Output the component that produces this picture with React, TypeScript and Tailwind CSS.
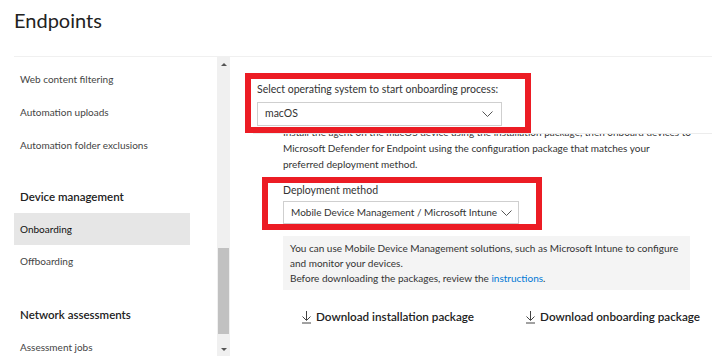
import React from "react";

const font = { fontFamily: 'Lato, "Noto Sans", sans-serif' };

function Chevron() {
  return (
    <svg width="11" height="6" viewBox="0 0 11 6" fill="none">
      <path d="M0.5 0.5 L5.5 5.5 L10.5 0.5" stroke="#555" strokeWidth="1" />
    </svg>
  );
}

function DownloadIcon() {
  return (
    <svg width="11" height="14" viewBox="0 0 11 14" fill="none">
      <path d="M5.5 1 V10 M1.5 6.5 L5.5 10.5 L9.5 6.5 M1 13 H10" stroke="#444" strokeWidth="1" />
    </svg>
  );
}

function NavItem({ children }: { children: React.ReactNode }) {
  return (
    <div className="h-[33px] flex items-center pl-[6px] text-[10px] whitespace-nowrap text-[#444]">{children}</div>
  );
}

export default function App() {
  return (
    <div className="w-[712px] h-[356px] overflow-hidden bg-white flex flex-col" style={font}>
      <div className="h-[56px] pl-[14px] pt-[6px] text-[20px] text-[#222] leading-[28px]">Endpoints</div>
      <div className="ml-[14px] h-px bg-[#f0f0f0]" />
      <div className="flex flex-1 min-h-0">
        <div className="w-[217px] shrink-0 pl-[14px] flex flex-col">
          <div className="w-[176px] pt-[6px] flex flex-col">
            <NavItem>Web content filtering</NavItem>
            <NavItem>Automation uploads</NavItem>
            <NavItem>Automation folder exclusions</NavItem>
            <div className="h-[19px]" />
            <div className="h-[32px] flex items-center pl-[6px] text-[11.5px] font-semibold text-[#222] whitespace-nowrap">Device management</div>
            <div className="h-[32px] flex items-center pl-[6px] text-[10px] text-[#111] bg-[#e6e6e6]">Onboarding</div>
            <div className="h-[32px] flex items-center pl-[6px] text-[10px] text-[#444]">Offboarding</div>
            <div className="h-[22px]" />
            <div className="h-[32px] flex items-center pl-[6px] text-[11.5px] font-semibold text-[#222] whitespace-nowrap">Network assessments</div>
            <div className="h-[32px] flex items-center pl-[6px] text-[10px] text-[#444] whitespace-nowrap">Assessment jobs</div>
          </div>
        </div>
        <div className="w-[13px] shrink-0 bg-[#f0f0f0] flex flex-col items-center">
          <div className="h-[14px] flex items-center justify-center">
            <div className="w-0 h-0 border-l-[3px] border-r-[3px] border-b-[3px] border-l-transparent border-r-transparent border-b-[#555]" />
          </div>
          <div className="flex-1" />
          <div className="w-[11px] h-[86px] bg-[#c1c1c1]" />
          <div className="h-[8px]" />
          <div className="h-[14px] flex items-center justify-center">
            <div className="w-0 h-0 border-l-[3px] border-r-[3px] border-t-[3px] border-l-transparent border-r-transparent border-t-[#555]" />
          </div>
        </div>
        <div className="flex-1 min-w-0 flex flex-col text-[10px] text-[#333] whitespace-nowrap">
          <div className="ml-[15px] mt-[16px] w-[286px] h-[60px] border-[6px] border-[#ec1c24] pl-[6px] pt-[3px]">
            <div className="leading-[14px] text-[10.5px] text-[#333]">Select operating system to start onboarding process:</div>
            <div className="mt-[6px] w-[245px] h-[24px] border border-[#cfcfcf] flex items-center justify-between pl-[7px] pr-[8px] text-[10.5px]">
              <span>macOS</span>
              <Chevron />
            </div>
          </div>
          <div className="ml-[23px] h-px bg-[#ececec]" />
          <div className="ml-[53px] h-[37px] overflow-hidden">
            <div className="-mt-[10px] leading-[16px] text-[10px]">
              Install the agent on the macOS device using the installation package, then onboard devices to
              <br />
              Microsoft Defender for Endpoint using the configuration package that matches your
              <br />
              preferred deployment method.
            </div>
          </div>
          <div className="ml-[32px] mt-[6px] w-[280px] h-[53px] border-[6px] border-[#ec1c24] pl-[15px]">
            <div className="leading-[14px] text-[10.5px]">Deployment method</div>
            <div className="mt-[4px] w-[236px] h-[23px] border border-[#cfcfcf] flex items-center justify-between pl-[7px] pr-[6px]">
              <span>Mobile Device Management / Microsoft Intune</span>
              <Chevron />
            </div>
          </div>
          <div className="ml-[53px] mt-[6px] w-[407px] h-[54px] bg-[#f4f4f4] pl-[7px] pt-[5px] leading-[15px] text-[#333]">
            You can use Mobile Device Management solutions, such as Microsoft Intune to configure
            <br />
            and monitor your devices.
            <br />
            Before downloading the packages, review the <span className="text-[#0078d4]">instructions</span>.
          </div>
          <div className="mt-[18px] flex items-center text-[11.7px] font-semibold text-[#222]">
            <div className="ml-[71px] flex items-center gap-[4px]">
              <DownloadIcon />
              <span>Download installation package</span>
            </div>
            <div className="ml-[51px] flex items-center gap-[4px]">
              <DownloadIcon />
              <span>Download onboarding package</span>
            </div>
          </div>
        </div>
      </div>
    </div>
  );
}
